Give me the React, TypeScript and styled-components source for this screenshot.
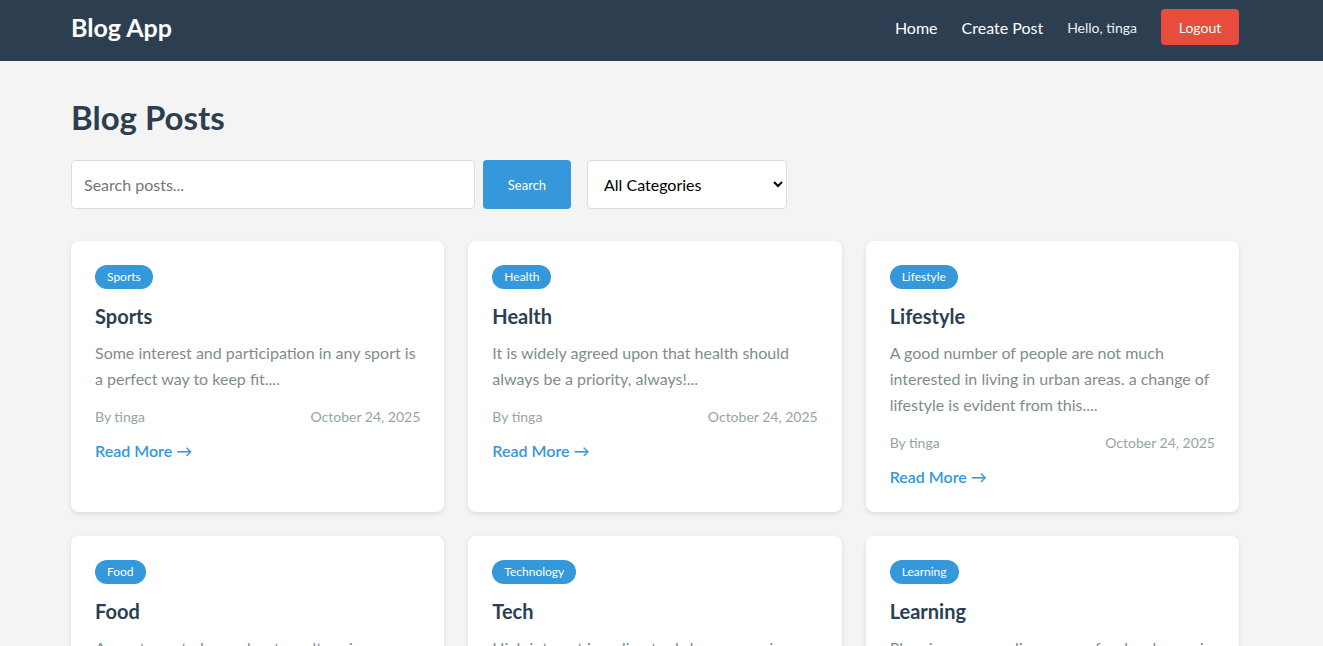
import styled, { createGlobalStyle } from "styled-components";

const GlobalStyle = createGlobalStyle`
  * {
    box-sizing: border-box;
  }
  body {
    margin: 0;
    background: #f4f4f4;
    font-family: Lato, "Open Sans", "Liberation Sans", sans-serif;
    color: #333;
  }
`;

type Post = {
  id: number;
  category: string;
  title: string;
  excerpt: string;
  author: string;
  date: string;
};

const posts: Post[] = [
  {
    id: 1,
    category: "Sports",
    title: "Sports",
    excerpt: "Some interest and participation in any sport is a perfect way to keep fit....",
    author: "tinga",
    date: "October 24, 2025",
  },
  {
    id: 2,
    category: "Health",
    title: "Health",
    excerpt: "It is widely agreed upon that health should always be a priority, always!...",
    author: "tinga",
    date: "October 24, 2025",
  },
  {
    id: 3,
    category: "Lifestyle",
    title: "Lifestyle",
    excerpt:
      "A good number of people are not much interested in living in urban areas. a change of lifestyle is evident from this....",
    author: "tinga",
    date: "October 24, 2025",
  },
  {
    id: 4,
    category: "Food",
    title: "Food",
    excerpt: "A great way to learn about a culture is definitely its food and the way it is made....",
    author: "tinga",
    date: "October 24, 2025",
  },
  {
    id: 5,
    category: "Technology",
    title: "Tech",
    excerpt: "High interest in online tools keeps growing every single year....",
    author: "tinga",
    date: "October 24, 2025",
  },
  {
    id: 6,
    category: "Learning",
    title: "Learning",
    excerpt: "Planning on an online course for developers is the way to go....",
    author: "tinga",
    date: "October 24, 2025",
  },
];

const Navbar = styled.nav`
  background: #2c3e50;
  height: 61px;
`;

const NavInner = styled.div`
  width: 1168px;
  margin: 0 auto 0 71px;
  height: 100%;
  padding-bottom: 7px;
  display: flex;
  align-items: center;
  justify-content: space-between;
`;

const Brand = styled.a`
  color: #fff;
  font-size: 25px;
  font-weight: 700;
  text-decoration: none;
`;

const NavLinks = styled.div`
  display: flex;
  align-items: center;
  gap: 24px;
`;

const NavLink = styled.a`
  color: #fff;
  font-size: 16px;
  text-decoration: none;
`;

const Greeting = styled.span`
  color: #ecf0f1;
  font-size: 14px;
`;

const LogoutButton = styled.button`
  background: #e74c3c;
  color: #fff;
  border: none;
  border-radius: 4px;
  height: 36px;
  width: 78px;
  font-family: inherit;
  font-size: 14px;
  cursor: pointer;
`;

const Container = styled.main`
  width: 1168px;
  margin: 0 auto 0 71px;
  padding-top: 36px;
`;

const PageTitle = styled.h1`
  margin: 0 0 23px;
  font-size: 33px;
  line-height: 40px;
  color: #2c3e50;
  font-weight: 700;
`;

const SearchBar = styled.form`
  display: flex;
  align-items: center;
  margin-bottom: 32px;
`;

const SearchInput = styled.input`
  width: 404px;
  height: 49px;
  padding: 0 12px;
  border: 1px solid #ddd;
  border-radius: 4px;
  font-family: inherit;
  font-size: 16px;
  color: #333;
  background: #fff;
  &::placeholder {
    color: #757575;
  }
`;

const SearchButton = styled.button`
  width: 88px;
  height: 49px;
  margin-left: 8px;
  background: #3498db;
  color: #fff;
  border: none;
  border-radius: 4px;
  font-family: inherit;
  font-size: 13px;
  cursor: pointer;
`;

const CategorySelect = styled.select`
  width: 200px;
  height: 49px;
  margin-left: 16px;
  padding: 0 12px;
  border: 1px solid #ddd;
  border-radius: 4px;
  background: #fff;
  font-family: inherit;
  font-size: 16px;
  color: #000;
`;

const Grid = styled.div`
  display: grid;
  grid-template-columns: repeat(3, 1fr);
  gap: 24px;
`;

const Card = styled.article`
  background: #fff;
  border-radius: 8px;
  padding: 24px;
  box-shadow: 0 2px 5px rgba(0, 0, 0, 0.1);
`;

const Tag = styled.span`
  display: inline-block;
  background: #3498db;
  color: #fff;
  font-size: 12px;
  line-height: 16px;
  padding: 4px 12px;
  border-radius: 12px;
  margin-bottom: 12px;
`;

const CardTitle = styled.h3`
  margin: 0 0 9px;
  font-size: 20px;
  line-height: 30px;
  color: #2c3e50;
  font-weight: 700;
`;

const Excerpt = styled.p`
  margin: 0 0 14px;
  font-size: 16px;
  line-height: 26px;
  color: #7f8c8d;
`;

const Meta = styled.div`
  display: flex;
  justify-content: space-between;
  font-size: 14px;
  line-height: 21px;
  color: #95a5a6;
  margin-bottom: 13px;
`;

const ReadMore = styled.a`
  display: inline-block;
  color: #3498db;
  font-size: 16px;
  line-height: 22px;
  font-weight: 600;
  text-decoration: none;
  vertical-align: top;
`;

export default function App() {
  return (
    <>
      <GlobalStyle />
      <Navbar>
        <NavInner>
          <Brand href="#">Blog App</Brand>
          <NavLinks>
            <NavLink href="#">Home</NavLink>
            <NavLink href="#">Create Post</NavLink>
            <Greeting>Hello, tinga</Greeting>
            <LogoutButton>Logout</LogoutButton>
          </NavLinks>
        </NavInner>
      </Navbar>
      <Container>
        <PageTitle>Blog Posts</PageTitle>
        <SearchBar onSubmit={(e) => e.preventDefault()}>
          <SearchInput placeholder="Search posts..." />
          <SearchButton type="submit">Search</SearchButton>
          <CategorySelect defaultValue="">
            <option value="">All Categories</option>
            <option value="sports">Sports</option>
            <option value="health">Health</option>
            <option value="lifestyle">Lifestyle</option>
            <option value="food">Food</option>
            <option value="technology">Technology</option>
            <option value="learning">Learning</option>
          </CategorySelect>
        </SearchBar>
        <Grid>
          {posts.map((post) => (
            <Card key={post.id}>
              <Tag>{post.category}</Tag>
              <CardTitle>{post.title}</CardTitle>
              <Excerpt>{post.excerpt}</Excerpt>
              <Meta>
                <span>By {post.author}</span>
                <span>{post.date}</span>
              </Meta>
              <ReadMore href="#">Read More →</ReadMore>
            </Card>
          ))}
        </Grid>
      </Container>
    </>
  );
}
